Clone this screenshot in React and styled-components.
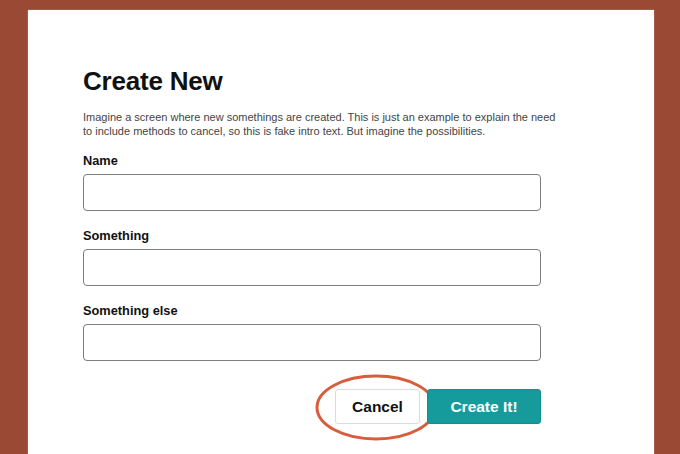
import React from "react";
import styled, { createGlobalStyle } from "styled-components";

const Global = createGlobalStyle`
  html, body { margin: 0; padding: 0; background: #9a4935; }
  body { font-family: "Liberation Sans", Arial, sans-serif; }
  * { box-sizing: border-box; }
`;

const Page = styled.div`
  width: 680px;
  height: 454px;
  overflow: hidden;
  padding: 10px 26px 0 28px;
  background: #9a4935;
`;

const Card = styled.div`
  background: #ffffff;
  width: 626px;
  height: 460px;
  padding: 56px 0 0 55px;
  box-shadow: 0 0 1px rgba(255, 230, 220, 0.7);
`;

const Title = styled.h1`
  margin: 0;
  font-size: 26px;
  line-height: 30px;
  font-weight: 700;
  color: #111;
  letter-spacing: -0.2px;
`;

const Intro = styled.p`
  margin: 14px 0 0;
  width: 480px;
  font-size: 11px;
  line-height: 14px;
  color: #444;
`;

const Form = styled.div`
  display: flex;
  flex-direction: column;
  margin-top: 16px;
  width: 458px;
`;

const Field = styled.div`
  display: flex;
  flex-direction: column;
  margin-bottom: ${(p) => (p.$last ? "28px" : "18px")};
`;

const Label = styled.label`
  font-size: 12.8px;
  font-weight: 700;
  color: #111;
  line-height: 14px;
  margin-bottom: 6px;
`;

const Input = styled.div`
  height: 37px;
  border: 1px solid #7d7d7d;
  border-radius: 4px;
  background: #fff;
`;

const Actions = styled.div`
  display: flex;
  justify-content: flex-end;
  gap: 7px;
`;

const Btn = styled.button`
  font-family: "Liberation Sans", Arial, sans-serif;
  font-size: 15.5px;
  font-weight: 700;
  height: 35px;
  padding: 0;
  width: ${(p) => p.$w}px;
  border-radius: 3px;
  border: 1px solid ${(p) => (p.$primary ? "#118f91" : "#dcdcdc")};
  background: ${(p) => (p.$primary ? "#159b9c" : "#fff")};
  color: ${(p) => (p.$primary ? "#fff" : "#111")};
  position: relative;
`;

const Oval = styled.svg`
  position: absolute;
  left: -21px;
  top: -16px;
  width: 122px;
  height: 67px;
  overflow: visible;
  pointer-events: none;
`;

export default function App() {
  return (
    <>
      <Global />
      <Page>
        <Card>
          <Title>Create New</Title>
          <Intro>
            Imagine a screen where new somethings are created. This is just an example to explain the need to include methods to cancel, so this is fake intro text. But imagine the possibilities.
          </Intro>
          <Form>
            <Field>
              <Label>Name</Label>
              <Input />
            </Field>
            <Field>
              <Label>Something</Label>
              <Input />
            </Field>
            <Field $last>
              <Label>Something else</Label>
              <Input />
            </Field>
            <Actions>
              <Btn $w={85}>
                Cancel
                <Oval viewBox="0 0 122 67">
                  <ellipse cx="61" cy="33.5" rx="59" ry="31.5" fill="none" stroke="#d65e3d" strokeWidth="3" />
                </Oval>
              </Btn>
              <Btn $primary $w={114}>Create It!</Btn>
            </Actions>
          </Form>
        </Card>
      </Page>
    </>
  );
}
